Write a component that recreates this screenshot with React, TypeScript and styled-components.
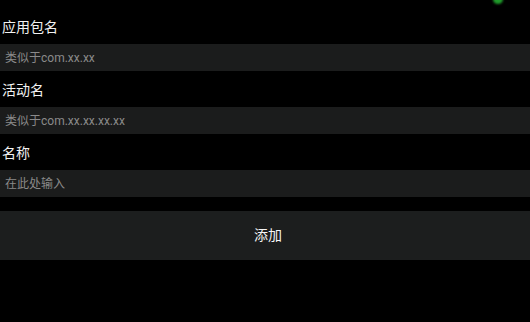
import * as React from "react";
import styled, { createGlobalStyle } from "styled-components";

const GlobalStyle = createGlobalStyle`
  html, body {
    margin: 0;
    padding: 0;
    background: #000;
  }
  body {
    font-family: Roboto, "Noto Sans CJK SC", sans-serif;
  }
`;

const SPage = styled.div`
  position: relative;
  width: 530px;
  height: 322px;
  background: #000;
  overflow: hidden;
  padding-top: 8px;
  box-sizing: border-box;
`;

const SIndicator = styled.div`
  position: absolute;
  top: -5px;
  left: 493px;
  width: 10px;
  height: 9px;
  border-radius: 50%;
  background: #1f9a2a;
  filter: blur(1.2px);
`;

const SForm = styled.div`
  display: flex;
  flex-direction: column;
`;

const SLabel = styled.div`
  height: 36px;
  display: flex;
  align-items: center;
  padding-left: 2px;
  color: #f2f2f2;
  font-size: 14px;
`;

const SInput = styled.input`
  height: 27px;
  width: 100%;
  box-sizing: border-box;
  border: none;
  outline: none;
  margin: 0;
  padding: 0 5px;
  background: #1b1c1c;
  color: #e0e0e0;
  font-family: Roboto, "Noto Sans CJK SC", sans-serif;
  font-size: 12px;
  &::placeholder {
    color: #8a8a8a;
  }
`;

const SButton = styled.button`
  margin-top: 14px;
  height: 49px;
  width: 100%;
  border: none;
  padding: 0 0 4px 6px;
  background: #1c1e1e;
  color: #f5f5f5;
  font-family: Roboto, "Noto Sans CJK SC", sans-serif;
  font-size: 14px;
  cursor: pointer;
`;

const fields = [
  { label: "应用包名", placeholder: "类似于com.xx.xx" },
  { label: "活动名", placeholder: "类似于com.xx.xx.xx.xx" },
  { label: "名称", placeholder: "在此处输入" },
];

const App = () => {
  return (
    <SPage>
      <GlobalStyle />
      <SIndicator />
      <SForm>
        {fields.map((f) => (
          <React.Fragment key={f.label}>
            <SLabel>{f.label}</SLabel>
            <SInput placeholder={f.placeholder} />
          </React.Fragment>
        ))}
        <SButton>{"添加"}</SButton>
      </SForm>
    </SPage>
  );
};

export default App;
